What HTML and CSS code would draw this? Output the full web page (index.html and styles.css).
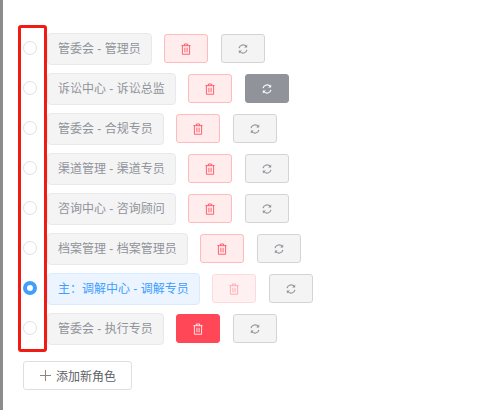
FILE: index.html
```html
<!DOCTYPE html>
<html lang="en">
<head>
    <meta charset="UTF-8">
    <title>角色</title>
    <link rel="stylesheet" href="styles.css">
</head>
<body>
    <svg width="0" height="0" class="icon-defs">
        <symbol id="icon-trash" viewBox="0 0 12 14">
            <path d="M.5 3h11M4 3V1h4v2M1.7 3v10.3h8.6V3M4.7 5.5v5.5M7.3 5.5v5.5" fill="none" stroke="currentColor"/>
        </symbol>
        <symbol id="icon-refresh" viewBox="0 0 12 12">
            <path d="M1.2 5A5 5 0 0 1 10 3M10.8 7A5 5 0 0 1 2 9" fill="none" stroke="currentColor" stroke-width="1.3"/>
            <path d="M11 .6v3.6H7.4zM1 11.4V7.8h3.6z" fill="currentColor"/>
        </symbol>
    </svg>

    <div class="edge-strip"></div>

    <div class="role-list">
        <div class="role-row">
            <span class="radio"></span>
            <span class="role-tag">管委会 - 管理员</span>
            <button class="btn btn-del"><svg class="icon-del"><use href="#icon-trash"/></svg></button>
            <button class="btn btn-sync"><svg class="icon-sync"><use href="#icon-refresh"/></svg></button>
        </div>
        <div class="role-row">
            <span class="radio"></span>
            <span class="role-tag">诉讼中心 - 诉讼总监</span>
            <button class="btn btn-del"><svg class="icon-del"><use href="#icon-trash"/></svg></button>
            <button class="btn btn-sync hover"><svg class="icon-sync"><use href="#icon-refresh"/></svg></button>
        </div>
        <div class="role-row">
            <span class="radio"></span>
            <span class="role-tag">管委会 - 合规专员</span>
            <button class="btn btn-del"><svg class="icon-del"><use href="#icon-trash"/></svg></button>
            <button class="btn btn-sync"><svg class="icon-sync"><use href="#icon-refresh"/></svg></button>
        </div>
        <div class="role-row">
            <span class="radio"></span>
            <span class="role-tag">渠道管理 - 渠道专员</span>
            <button class="btn btn-del"><svg class="icon-del"><use href="#icon-trash"/></svg></button>
            <button class="btn btn-sync"><svg class="icon-sync"><use href="#icon-refresh"/></svg></button>
        </div>
        <div class="role-row">
            <span class="radio"></span>
            <span class="role-tag">咨询中心 - 咨询顾问</span>
            <button class="btn btn-del"><svg class="icon-del"><use href="#icon-trash"/></svg></button>
            <button class="btn btn-sync"><svg class="icon-sync"><use href="#icon-refresh"/></svg></button>
        </div>
        <div class="role-row">
            <span class="radio"></span>
            <span class="role-tag">档案管理 - 档案管理员</span>
            <button class="btn btn-del"><svg class="icon-del"><use href="#icon-trash"/></svg></button>
            <button class="btn btn-sync"><svg class="icon-sync"><use href="#icon-refresh"/></svg></button>
        </div>
        <div class="role-row">
            <span class="radio checked"></span>
            <span class="role-tag primary">主：调解中心 - 调解专员</span>
            <button class="btn btn-del disabled"><svg class="icon-del"><use href="#icon-trash"/></svg></button>
            <button class="btn btn-sync"><svg class="icon-sync"><use href="#icon-refresh"/></svg></button>
        </div>
        <div class="role-row">
            <span class="radio"></span>
            <span class="role-tag">管委会 - 执行专员</span>
            <button class="btn btn-del hover"><svg class="icon-del"><use href="#icon-trash"/></svg></button>
            <button class="btn btn-sync"><svg class="icon-sync"><use href="#icon-refresh"/></svg></button>
        </div>

        <div class="mark-box"></div>
    </div>

    <button class="add-btn"><span class="plus"></span>添加新角色</button>
</body>
</html>
```

FILE: styles.css
```css
html, body {
    height: 100%;
}

body {
    margin: 0;
    padding: 33px 0 0 23px;
    box-sizing: border-box;
    overflow: hidden;
    background: #fff;
    font-family: "Liberation Sans", "Noto Sans CJK SC", sans-serif;
    font-size: 12px;
}

.icon-defs {
    position: absolute;
}

.edge-strip {
    position: absolute;
    left: 0;
    top: 0;
    bottom: 0;
    width: 3px;
    background: #8c8c8c;
}

.role-list {
    position: relative;
    display: flex;
    flex-direction: column;
    gap: 8px;
}

.role-row {
    display: flex;
    align-items: center;
    height: 32px;
}

.radio {
    width: 14px;
    height: 14px;
    box-sizing: border-box;
    margin: 0 10px 2px 0;
    border: 1px solid #dcdfe6;
    border-radius: 50%;
    background: #fff;
}

.radio.checked {
    border: 4px solid #409eff;
}

.role-tag {
    height: 32px;
    box-sizing: border-box;
    padding: 0 10px;
    margin-right: 12px;
    border: 1px solid #e9e9eb;
    border-radius: 4px;
    background: #f4f4f5;
    color: #909399;
    line-height: 30px;
    white-space: nowrap;
}

.role-tag.primary {
    border-color: #d9ecff;
    background: #ecf5ff;
    color: #409eff;
}

.btn {
    display: flex;
    align-items: center;
    justify-content: center;
    width: 44px;
    height: 29px;
    padding: 0;
    margin-bottom: 1px;
    border-radius: 3px;
    border: 1px solid;
}

.btn-del {
    margin-right: 13px;
    border-color: #fbb;
    background: #ffeded;
    color: #ff4757;
}

.btn-del.disabled {
    border-color: #ffdadd;
    background: #fff0f1;
    color: #ffa3ab;
}

.btn-del.hover {
    border-color: #ff4757;
    background: #ff4757;
    color: #fff;
}

.btn-sync {
    border-color: #d3d4d6;
    background: #f4f4f5;
    color: #909399;
}

.btn-sync.hover {
    border-color: #909399;
    background: #909399;
    color: #fff;
}

.icon-del {
    width: 10px;
    height: 12px;
}

.icon-sync {
    width: 10px;
    height: 10px;
}

.mark-box {
    position: absolute;
    left: -5px;
    top: -8px;
    width: 23px;
    height: 321px;
    border: 3px solid #f01c14;
    border-radius: 3px;
}

.add-btn {
    display: flex;
    align-items: center;
    width: 109px;
    height: 29px;
    margin-top: 16px;
    padding: 0 0 0 16px;
    border: 1px solid #dcdfe6;
    border-radius: 3px;
    background: #fff;
    color: #606266;
    font-family: inherit;
    font-size: 12px;
}

.plus {
    position: relative;
    width: 11px;
    height: 1px;
    margin-right: 5px;
    background: #8f8578;
}

.plus::after {
    content: "";
    position: absolute;
    left: 5px;
    top: -5px;
    width: 1px;
    height: 11px;
    background: #8f8578;
}
```
